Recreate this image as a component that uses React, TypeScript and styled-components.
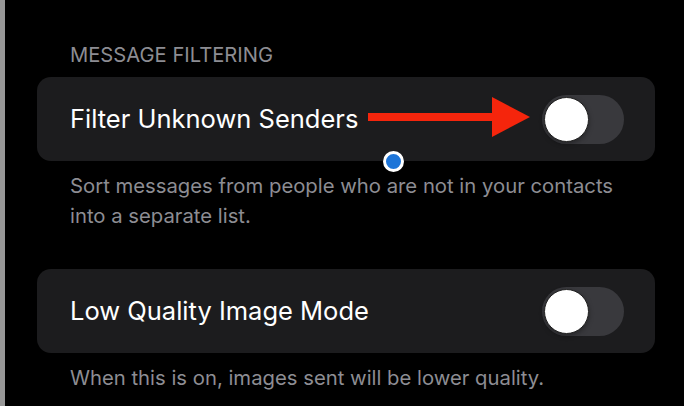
import styled, { createGlobalStyle } from "styled-components";

const GlobalStyle = createGlobalStyle`
  html, body {
    margin: 0;
    padding: 0;
    background: #000;
  }
  body {
    font-family: Inter, "Noto Sans", sans-serif;
    -webkit-font-smoothing: antialiased;
  }
`;

function Toggle() {
  return (
    <Track>
      <Knob />
    </Track>
  );
}

function Arrow() {
  return (
    <ArrowSvg width="162" height="40" viewBox="0 0 162 40">
      <rect x="0" y="16" width="126" height="8" fill="#f5250c" />
      <polygon points="124,0 162,20 124,40" fill="#f5250c" />
    </ArrowSvg>
  );
}

export default function App() {
  return (
    <Page>
      <GlobalStyle />
      <Strip />
      <Content>
        <SectionHeader>MESSAGE FILTERING</SectionHeader>
        <Card>
          <Label>Filter Unknown Senders</Label>
          <Toggle />
          <Arrow />
          <Dot />
        </Card>
        <Footer>
          Sort messages from people who are not in your contacts
          <br />
          into a separate list.
        </Footer>
        <Card $gap={38}>
          <Label>Low Quality Image Mode</Label>
          <Toggle />
        </Card>
        <Footer>When this is on, images sent will be lower quality.</Footer>
      </Content>
    </Page>
  );
}

const Page = styled.div`
  display: flex;
  width: 684px;
  height: 406px;
  overflow: hidden;
  background: #000;
`;

const Strip = styled.div`
  width: 5px;
  flex-shrink: 0;
  background: #979797;
`;

const Content = styled.div`
  flex: 1;
  display: flex;
  flex-direction: column;
  padding: 43px 29px 0 32px;
`;

const SectionHeader = styled.div`
  font-size: 20.2px;
  line-height: 24px;
  color: #8d8d93;
  padding-left: 33px;
  margin-bottom: 10px;
`;

const Card = styled.div<{ $gap?: number }>`
  position: relative;
  display: flex;
  align-items: center;
  justify-content: space-between;
  height: 84px;
  margin-top: ${(p) => p.$gap ?? 0}px;
  padding: 0 31px 0 33px;
  border-radius: 14px;
  background: #1c1c1e;
`;

const Label = styled.div`
  font-size: 25.5px;
  line-height: 30px;
  color: #fff;
`;

const Track = styled.div`
  position: relative;
  width: 82px;
  height: 49px;
  border-radius: 25px;
  background: #39393d;
  flex-shrink: 0;
`;

const Knob = styled.div`
  position: absolute;
  left: 2px;
  top: 2px;
  width: 45px;
  height: 45px;
  box-sizing: border-box;
  border-radius: 50%;
  background: #fff;
  border: 1px solid #222;
  box-shadow: 0 2px 5px rgba(0, 0, 0, 0.35);
`;

const ArrowSvg = styled.svg`
  position: absolute;
  left: 331px;
  top: 20px;
`;

const Dot = styled.div`
  position: absolute;
  left: 346px;
  top: 74px;
  width: 21px;
  height: 21px;
  box-sizing: border-box;
  border-radius: 50%;
  background: #1c74d8;
  border: 3px solid #fff;
`;

const Footer = styled.div`
  font-size: 20.3px;
  line-height: 30px;
  color: #8d8d93;
  padding-left: 33px;
  margin-top: 10px;
`;
